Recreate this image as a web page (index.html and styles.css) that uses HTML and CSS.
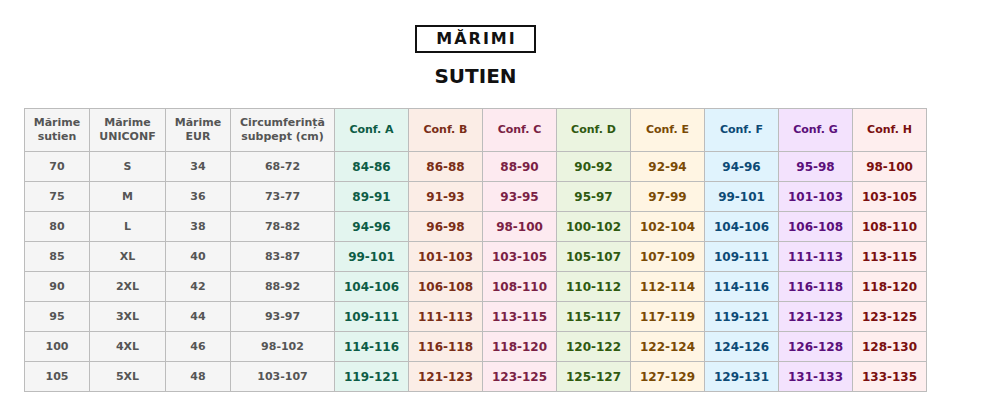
FILE: index.html
```html
<!DOCTYPE html>
<html lang="ro">
<head>
<meta charset="utf-8">
<title>Mărimi sutien</title>
<link rel="stylesheet" href="styles.css">
</head>
<body>
<div class="page">
  <div class="heading">
    <div class="badge">MĂRIMI</div>
    <h1 class="subtitle">SUTIEN</h1>
  </div>
  <table class="sizes">
    <colgroup>
      <col class="w65"><col class="w76"><col class="w65"><col class="w104">
      <col class="w74"><col class="w74"><col class="w74"><col class="w74">
      <col class="w74"><col class="w74"><col class="w74"><col class="w74">
    </colgroup>
    <thead>
      <tr>
        <th class="base">Mărime<br>sutien</th>
        <th class="base">Mărime<br>UNICONF</th>
        <th class="base">Mărime<br>EUR</th>
        <th class="base">Circumferință<br>subpept (cm)</th>
        <th class="ca">Conf. A</th>
        <th class="cb">Conf. B</th>
        <th class="cc">Conf. C</th>
        <th class="cd">Conf. D</th>
        <th class="ce">Conf. E</th>
        <th class="cf">Conf. F</th>
        <th class="cg">Conf. G</th>
        <th class="ch">Conf. H</th>
      </tr>
    </thead>
    <tbody>
      <tr><td class="base">70</td><td class="base">S</td><td class="base">34</td><td class="base">68-72</td><td class="ca">84-86</td><td class="cb">86-88</td><td class="cc">88-90</td><td class="cd">90-92</td><td class="ce">92-94</td><td class="cf">94-96</td><td class="cg">95-98</td><td class="ch">98-100</td></tr>
      <tr><td class="base">75</td><td class="base">M</td><td class="base">36</td><td class="base">73-77</td><td class="ca">89-91</td><td class="cb">91-93</td><td class="cc">93-95</td><td class="cd">95-97</td><td class="ce">97-99</td><td class="cf">99-101</td><td class="cg">101-103</td><td class="ch">103-105</td></tr>
      <tr><td class="base">80</td><td class="base">L</td><td class="base">38</td><td class="base">78-82</td><td class="ca">94-96</td><td class="cb">96-98</td><td class="cc">98-100</td><td class="cd">100-102</td><td class="ce">102-104</td><td class="cf">104-106</td><td class="cg">106-108</td><td class="ch">108-110</td></tr>
      <tr><td class="base">85</td><td class="base">XL</td><td class="base">40</td><td class="base">83-87</td><td class="ca">99-101</td><td class="cb">101-103</td><td class="cc">103-105</td><td class="cd">105-107</td><td class="ce">107-109</td><td class="cf">109-111</td><td class="cg">111-113</td><td class="ch">113-115</td></tr>
      <tr><td class="base">90</td><td class="base">2XL</td><td class="base">42</td><td class="base">88-92</td><td class="ca">104-106</td><td class="cb">106-108</td><td class="cc">108-110</td><td class="cd">110-112</td><td class="ce">112-114</td><td class="cf">114-116</td><td class="cg">116-118</td><td class="ch">118-120</td></tr>
      <tr><td class="base">95</td><td class="base">3XL</td><td class="base">44</td><td class="base">93-97</td><td class="ca">109-111</td><td class="cb">111-113</td><td class="cc">113-115</td><td class="cd">115-117</td><td class="ce">117-119</td><td class="cf">119-121</td><td class="cg">121-123</td><td class="ch">123-125</td></tr>
      <tr><td class="base">100</td><td class="base">4XL</td><td class="base">46</td><td class="base">98-102</td><td class="ca">114-116</td><td class="cb">116-118</td><td class="cc">118-120</td><td class="cd">120-122</td><td class="ce">122-124</td><td class="cf">124-126</td><td class="cg">126-128</td><td class="ch">128-130</td></tr>
      <tr><td class="base">105</td><td class="base">5XL</td><td class="base">48</td><td class="base">103-107</td><td class="ca">119-121</td><td class="cb">121-123</td><td class="cc">123-125</td><td class="cd">125-127</td><td class="ce">127-129</td><td class="cf">129-131</td><td class="cg">131-133</td><td class="ch">133-135</td></tr>
    </tbody>
  </table>
</div>
</body>
</html>
```
FILE: styles.css
```css
html, body {
  margin: 0;
  padding: 0;
  background: #ffffff;
}
body {
  font-family: "DejaVu Sans", "Noto Sans", sans-serif;
  font-weight: bold;
  color: #111;
}
.page {
  padding: 25px 0 0 24px;
  width: 903px;
}
.heading {
  display: flex;
  flex-direction: column;
  align-items: center;
}
.badge {
  border: 2px solid #111;
  padding: 3px 17px 3px 19px;
  font-size: 16px;
  line-height: 18px;
  letter-spacing: 2px;
  color: #111;
}
.subtitle {
  margin: 11px 0 20px;
  font-size: 20px;
  line-height: 24px;
  color: #111;
}
.sizes {
  border-collapse: collapse;
  table-layout: fixed;
  width: 903px;
}
.w65 { width: 65px; }
.w76 { width: 76px; }
.w104 { width: 104px; }
.w74 { width: 74px; }
.sizes th, .sizes td {
  border: 1px solid #bcbcbc;
  padding: 0;
  text-align: center;
  vertical-align: middle;
}
.sizes th {
  height: 42px;
  font-size: 11px;
  line-height: 14px;
}
.sizes td {
  height: 29px;
  font-size: 12px;
}
.sizes td.base {
  font-size: 11px;
}
.base { background: #f5f5f5; color: #555555; }
.ca { background: #e3f5ef; color: #0d5c45; }
.cb { background: #fbede6; color: #7a2e17; }
.cc { background: #fdeaf0; color: #7a1f45; }
.cd { background: #ebf4e0; color: #2f5a10; }
.ce { background: #fff5e3; color: #7a4a05; }
.cf { background: #e0f3fd; color: #0d4a75; }
.cg { background: #f3e2fd; color: #5a0f7a; }
.ch { background: #feeeee; color: #7a0f0f; }
```
